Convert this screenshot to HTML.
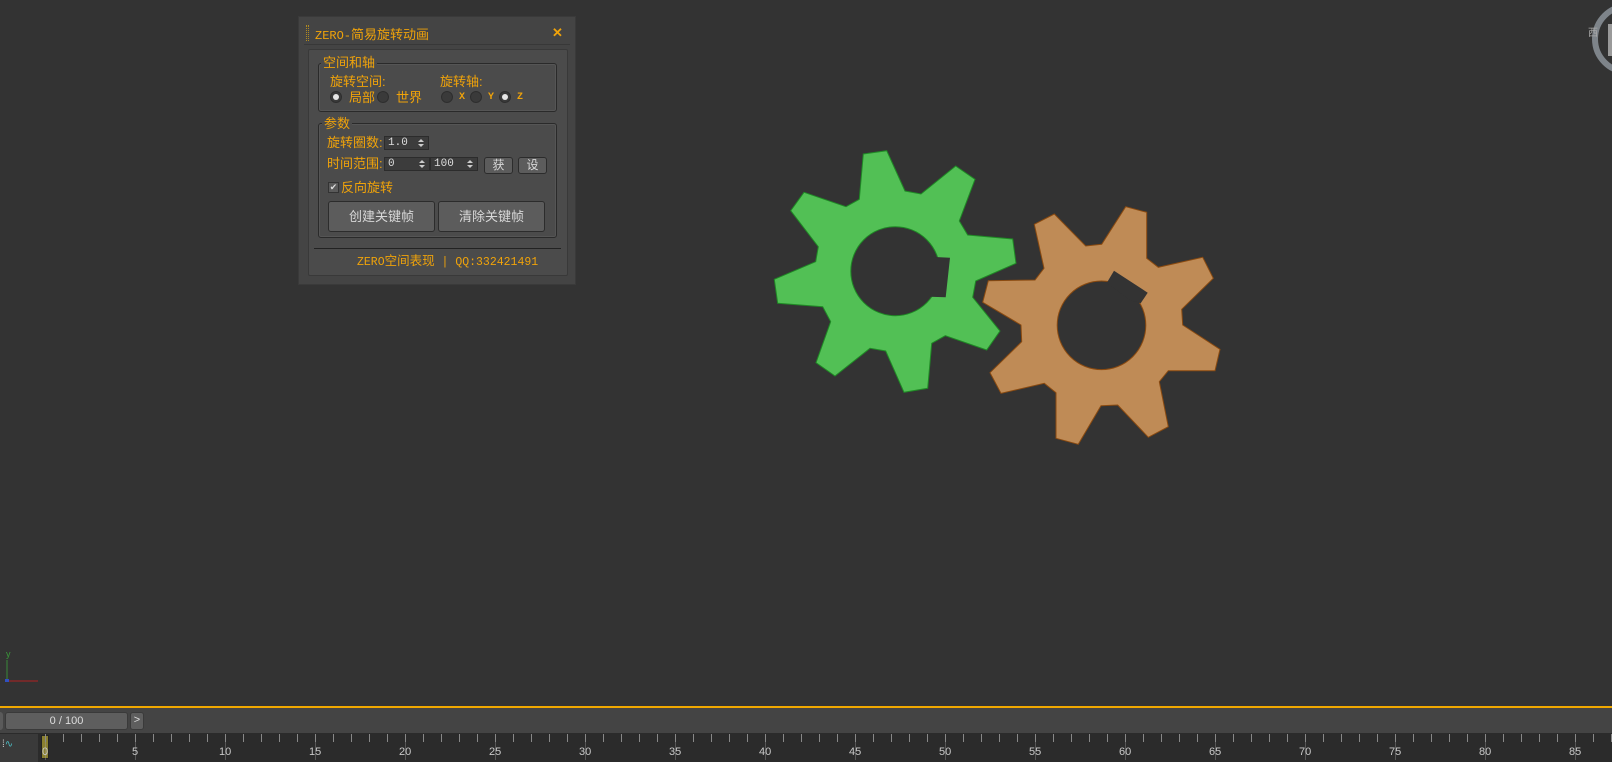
<!DOCTYPE html>
<html><head><meta charset="utf-8"><style>
*{margin:0;padding:0;box-sizing:border-box}
body{width:1612px;height:762px;background:#333333;position:relative;overflow:hidden;font-family:"Liberation Sans","Noto Sans CJK SC",sans-serif;font-size:12px;color:#f0a30a}
.a{position:absolute}
.t{position:absolute;white-space:nowrap;line-height:1}
.m{font-family:"Liberation Mono","Noto Sans CJK SC",monospace}
.box{position:absolute;border:1px solid #2a2a2a;border-radius:3px;box-shadow:inset 0 0 0 1px #555}
.rad{position:absolute;width:12px;height:12px;border-radius:50%;background:#3a3a3a;border:1px solid #2e2e2e}
.rad.on::after{content:"";position:absolute;left:2px;top:2px;width:6px;height:6px;border-radius:50%;background:#e6e6e6}
.sp{position:absolute;background:#3c3c3c;border:1px solid #2c2c2c;color:#ddd;font-family:"Liberation Mono",monospace;font-size:11px;line-height:12px;padding-left:3px}
.sp::after{content:"";position:absolute;right:4px;top:2px;width:0;height:0;border-left:3px solid transparent;border-right:3px solid transparent;border-bottom:3px solid #ccc}
.sp::before{content:"";position:absolute;right:4px;bottom:2px;width:0;height:0;border-left:3px solid transparent;border-right:3px solid transparent;border-top:3px solid #ccc}
.btn{position:absolute;background:#5c5c5c;border:1px solid #2c2c2c;border-radius:3px;color:#d8d8d8;text-align:center;font-size:13px}
.tick{position:absolute;top:734px;width:1px;height:8px;background:#888}
.lab{position:absolute;top:747px;font-size:11px;color:#c8c8c8;line-height:1}
</style></head><body>

<svg class="a" style="left:0;top:0" width="1612" height="762">
<polygon fill="#52c055" stroke="#1f8a25" stroke-width="1" points="863.3,154 886.7,150.7 905,191 921,194 955.7,166 975,179.3 959.3,221 967.7,235 1012.7,239 1016,263.3 975.7,281 972.7,297.3 1000,331 986.7,350 945.3,335.7 931.7,343.3 927.7,388.3 904,392.3 885.7,351 870,348.3 835,376 816,362.7 830.7,321.7 822.7,306.7 777.7,303.3 774.3,279.3 815.7,261.7 818.3,246.7 790.7,210.7 804,192.3 846,206.7 859.3,199.3"/>
<circle cx="895.3" cy="271.2" r="44.5" fill="#333" stroke="#1f8a25" stroke-width="1"/>
<polygon fill="#333" points="930,256.7 950,257.7 945.7,297.3 930,296.7"/>
<polygon fill="#bf8b56" stroke="#8a4a10" stroke-width="1" points="1034.3,224.3 1054.3,214 1085.7,246 1101.7,244.3 1125.7,206.7 1146.7,212.3 1146.7,258.3 1158.3,267.3 1202.7,257.3 1213.3,278.3 1181.7,309.3 1182.7,325 1220,349.3 1215,370.7 1168.3,370.7 1159.3,381.7 1168.3,426.7 1148.3,437.3 1117.7,405 1101,405.7 1078.3,444.3 1056,438.3 1056,392.7 1044.3,383.3 1001,393.3 990,372.7 1021.7,341.7 1021,325 982.7,302.3 988.3,280.7 1035,280 1044,268.3"/>
<circle cx="1101.5" cy="325.3" r="44.3" fill="#333" stroke="#8a4a10" stroke-width="1"/>
<polygon fill="#333" points="1106.7,283 1114,270.7 1147.7,292.7 1140.7,303.3 1130,300"/>
<circle cx="1628" cy="39" r="33" fill="none" stroke="#7e848a" stroke-width="6"/>
<rect x="1608" y="24" width="10" height="32" fill="#9a9a9a"/>
<line x1="7" y1="681" x2="7" y2="660" stroke="#3a8a3a" stroke-width="1"/>
<line x1="7" y1="681" x2="38" y2="681" stroke="#b02020" stroke-width="1"/>
<rect x="5" y="679" width="4" height="3" fill="#3050c0"/>
</svg>
<div class="t" style="left:1588px;top:29px;font-size:10px;color:#aaa">西</div>
<div class="t" style="left:6px;top:650px;font-size:9px;color:#3a9a3a">y</div>

<div class="a" style="left:298px;top:16px;width:278px;height:269px;background:#444444;border:1px solid #3a3a3a"></div>
<div class="a" style="left:306px;top:25px;width:1px;height:16px;border-left:1px dotted #b08a20"></div>
<div class="a" style="left:308px;top:25px;width:1px;height:16px;border-left:1px dotted #b08a20"></div>
<div class="t m" style="left:315px;top:27px;font-size:12px">ZERO-<span style="font-family:'Noto Sans CJK SC',sans-serif;font-size:13px">简易旋转动画</span></div>
<div class="t" style="left:552px;top:26px;font-size:13px;font-weight:bold">✕</div>
<div class="a" style="left:304px;top:44px;width:266px;height:1px;background:#383838"></div>
<div class="a" style="left:308px;top:49px;width:260px;height:227px;background:#4b4b4b;border:1px solid #393939;border-radius:2px"></div>

<div class="box" style="left:318px;top:63px;width:239px;height:49px"></div>
<div class="t" style="left:321px;top:56px;font-size:13px;background:#4b4b4b;padding:0 2px">空间和轴</div>
<div class="t" style="left:330px;top:75px;font-size:13px">旋转空间:</div>
<div class="t" style="left:440px;top:75px;font-size:13px">旋转轴:</div>
<div class="rad on" style="left:330px;top:91px"></div>
<div class="t" style="left:349px;top:91px;font-size:13px">局部</div>
<div class="rad" style="left:377px;top:91px"></div>
<div class="t" style="left:396px;top:91px;font-size:13px">世界</div>
<div class="rad" style="left:441px;top:91px"></div>
<div class="t m" style="left:459px;top:93px;font-size:10px;font-weight:bold">X</div>
<div class="rad" style="left:470px;top:91px"></div>
<div class="t m" style="left:488px;top:93px;font-size:10px;font-weight:bold">Y</div>
<div class="rad on" style="left:499px;top:91px"></div>
<div class="t m" style="left:517px;top:93px;font-size:10px;font-weight:bold">Z</div>

<div class="box" style="left:318px;top:123px;width:239px;height:115px"></div>
<div class="t" style="left:322px;top:117px;font-size:13px;background:#4b4b4b;padding:0 2px">参数</div>
<div class="t" style="left:327px;top:136px;font-size:13px">旋转圈数:</div>
<div class="sp" style="left:384px;top:136px;width:45px;height:14px">1.0</div>
<div class="t" style="left:327px;top:157px;font-size:13px">时间范围:</div>
<div class="sp" style="left:384px;top:157px;width:46px;height:14px">0</div>
<div class="sp" style="left:430px;top:157px;width:48px;height:14px">100</div>
<div class="btn" style="left:484px;top:157px;width:29px;height:17px;font-size:12px;line-height:15px">获</div>
<div class="btn" style="left:518px;top:157px;width:29px;height:17px;font-size:12px;line-height:15px">设</div>
<div class="a" style="left:328px;top:182px;width:11px;height:11px;background:#5a5a5a;border:1px solid #333;color:#ddd;font-size:9px;line-height:9px;text-align:center">✔</div>
<div class="t" style="left:341px;top:181px;font-size:13px">反向旋转</div>
<div class="btn" style="left:328px;top:201px;width:107px;height:31px;line-height:29px">创建关键帧</div>
<div class="btn" style="left:438px;top:201px;width:107px;height:31px;line-height:29px">清除关键帧</div>
<div class="a" style="left:314px;top:248px;width:247px;height:1px;background:#222"></div>
<div class="t m" style="left:357px;top:254px;font-size:11.5px">ZERO<span style="font-family:'Noto Sans CJK SC',sans-serif;font-size:12.5px">空间表现</span> | QQ:332421491</div>

<div class="a" style="left:0;top:706px;width:1612px;height:2px;background:#f0a800"></div>
<div class="a" style="left:0;top:708px;width:1612px;height:25px;background:#444"></div>
<div class="a" style="left:0;top:712px;width:3px;height:18px;background:#5a5a5a;border-radius:0 3px 3px 0"></div>
<div class="a" style="left:5px;top:712px;width:123px;height:18px;background:#5e5e5e;border:1px solid #3a3a3a;border-radius:3px;color:#ddd;text-align:center;font-size:11px;line-height:16px">0 / 100</div>
<div class="a" style="left:130px;top:712px;width:14px;height:18px;background:#5e5e5e;border:1px solid #3a3a3a;border-radius:3px;color:#ddd;text-align:center;font-size:11px;line-height:15px">&gt;</div>
<div class="a" style="left:0;top:733px;width:1612px;height:29px;background:#2b2b2b"></div>
<div class="a" style="left:0;top:734px;width:38px;height:28px;background:#3a3a3a"></div>
<div class="t" style="left:2px;top:740px;font-size:10px;color:#ccc">⁞<span style="color:#4ab8c0">∿</span></div>
<div class="a" style="left:41px;top:735px;width:8px;height:24px;background:#8a8030;border:1px solid #222"></div>
<div id="tl"></div>
<script>
var h='';for(var f=0;f<=88;f++){var x=45+f*18;if(x>1611)break;
if(f%5==0){h+='<div class="tick" style="left:'+x+'px;height:26px;background:#aaa;top:734px;width:1px;opacity:.35"></div><div class="tick" style="left:'+x+'px"></div><div class="lab" style="left:'+(x-3-(f>=10?3:0))+'px">'+f+'</div>';}
else h+='<div class="tick" style="left:'+x+'px"></div>';}
document.getElementById('tl').innerHTML=h;
</script>
</body></html>
